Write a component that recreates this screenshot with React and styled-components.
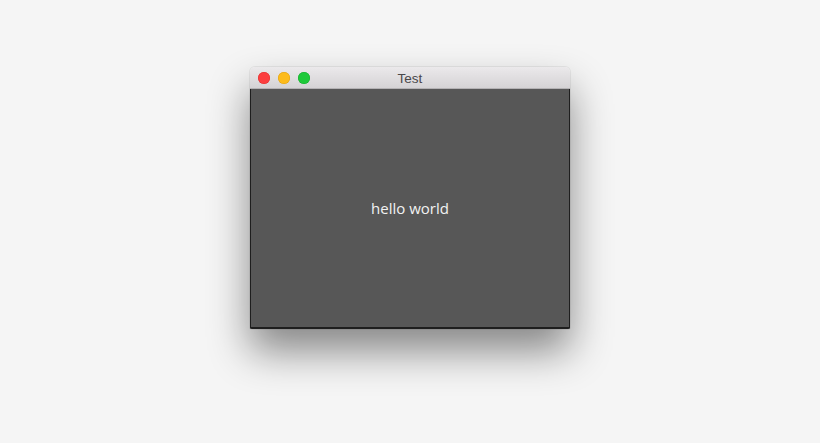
import React from 'react';
import styled, { createGlobalStyle } from 'styled-components';

const GlobalStyle = createGlobalStyle`
  html, body {
    margin: 0;
    padding: 0;
    background: #f5f5f5;
  }
  body {
    font-family: 'Open Sans', 'Liberation Sans', sans-serif;
  }
`;

const Page = styled.div`
  width: 820px;
  height: 443px;
  display: flex;
  justify-content: center;
  align-items: flex-start;
  padding-top: 67px;
  box-sizing: border-box;
`;

const Window = styled.div`
  width: 320px;
  height: 262px;
  display: flex;
  flex-direction: column;
  border-radius: 5px 5px 2px 2px;
  overflow: hidden;
  box-shadow: 0 22px 40px rgba(0, 0, 0, 0.45), 0 0 0 1px rgba(0, 0, 0, 0.06);
`;

const TitleBar = styled.div`
  position: relative;
  height: 22px;
  flex: none;
  display: flex;
  align-items: center;
  justify-content: center;
  background: linear-gradient(#ebe9eb, #d5d3d5);
  border-bottom: 1px solid #b4b2b4;
  box-sizing: border-box;
`;

const Lights = styled.div`
  position: absolute;
  left: 8px;
  top: 5px;
  display: flex;
  gap: 8px;
`;

const Light = styled.span`
  width: 12px;
  height: 12px;
  border-radius: 50%;
  background: ${(p) => p.color};
  box-shadow: inset 0 0 0 0.5px ${(p) => p.edge};
`;

const Title = styled.span`
  font-family: 'Liberation Sans', Arial, sans-serif;
  font-size: 13.5px;
  color: #4a484a;
  margin-top: 1px;
`;

const Body = styled.div`
  flex: 1;
  display: flex;
  align-items: center;
  justify-content: center;
  background: #575757;
  border: 1px solid #1e1e1e;
  border-top: none;
  border-bottom-width: 2px;
`;

const Hello = styled.span`
  font-size: 15px;
  color: #f2f2f2;
`;

export default function App() {
  return (
    <>
      <GlobalStyle />
      <Page>
        <Window>
          <TitleBar>
            <Lights>
              <Light color='#fc3e3f' edge='#e0302f' />
              <Light color='#fdbb1b' edge='#e0a010' />
              <Light color='#1ec93a' edge='#15ad2c' />
            </Lights>
            <Title>Test</Title>
          </TitleBar>
          <Body>
            <Hello>hello world</Hello>
          </Body>
        </Window>
      </Page>
    </>
  );
}
